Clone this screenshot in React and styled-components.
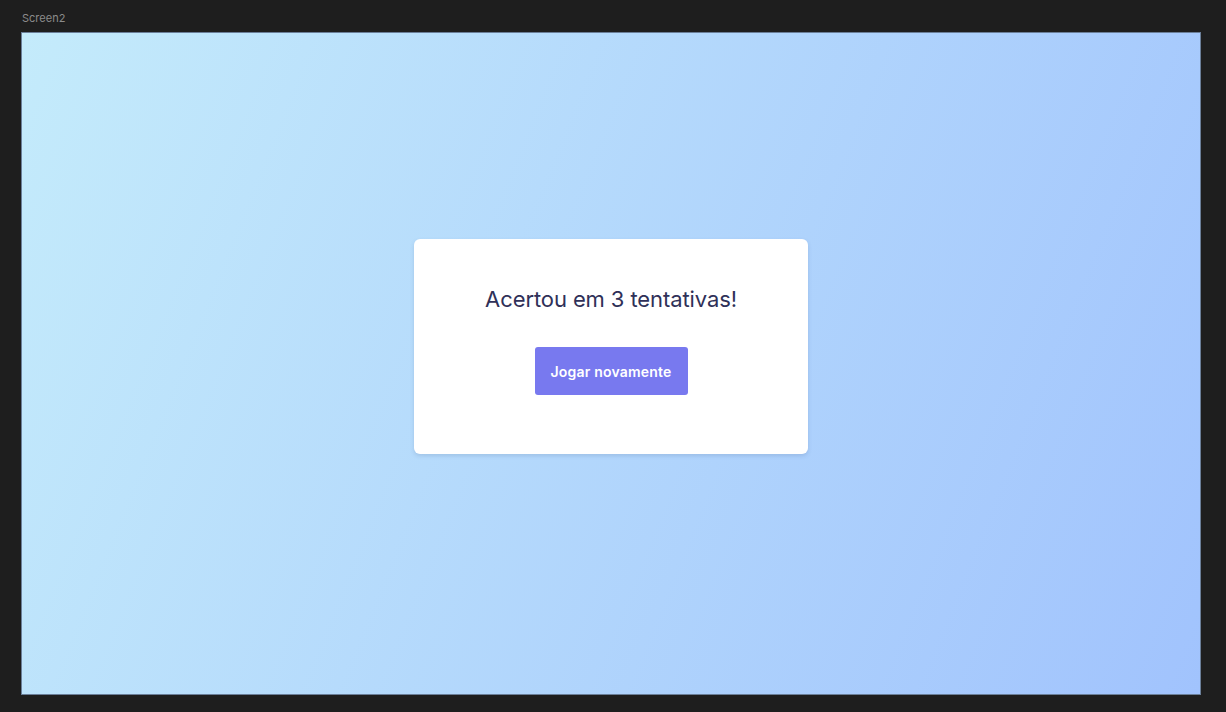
import React from 'react';
import styled, { createGlobalStyle } from 'styled-components';

const GlobalStyle = createGlobalStyle`
  html, body {
    margin: 0;
    padding: 0;
    background: #1e1e1e;
  }
  body {
    font-family: Inter, "Noto Sans", Arial, sans-serif;
  }
`;

const Canvas = styled.div`
  width: 1226px;
  height: 712px;
  background: #1e1e1e;
  padding: 12px 0 0 21px;
  box-sizing: border-box;
`;

const FrameLabel = styled.div`
  font-size: 11px;
  line-height: 13px;
  color: #8b8b8b;
  padding-left: 1px;
  margin-bottom: 7px;
`;

const Frame = styled.div`
  width: 1180px;
  height: 663px;
  box-sizing: border-box;
  border: 1px solid #6b7f99;
  background: linear-gradient(112deg, #c4ebfb 0%, #a1c3fd 100%);
  display: flex;
  flex-direction: column;
  align-items: center;
  padding-top: 206px;
`;

const Card = styled.div`
  width: 394px;
  height: 215px;
  box-sizing: border-box;
  background: #ffffff;
  border-radius: 6px;
  box-shadow: 0 2px 4px rgba(60, 90, 140, 0.18);
  display: flex;
  flex-direction: column;
  align-items: center;
  padding-top: 47px;
`;

const Title = styled.h1`
  margin: 0;
  font-size: 22px;
  line-height: 27px;
  font-weight: 400;
  color: #2f3058;
  letter-spacing: -0.1px;
`;

const PlayButton = styled.button`
  margin-top: 34px;
  width: 153px;
  height: 48px;
  border: none;
  border-radius: 3px;
  background: #7879ef;
  color: #ffffff;
  font-family: inherit;
  font-size: 14px;
  font-weight: 600;
  letter-spacing: 0.2px;
  cursor: pointer;
  &:hover {
    background: #6667e0;
  }
`;

export default function App() {
  return (
    <>
      <GlobalStyle />
      <Canvas>
        <FrameLabel>Screen2</FrameLabel>
        <Frame>
          <Card>
            <Title>Acertou em 3 tentativas!</Title>
            <PlayButton>Jogar novamente</PlayButton>
          </Card>
        </Frame>
      </Canvas>
    </>
  );
}
